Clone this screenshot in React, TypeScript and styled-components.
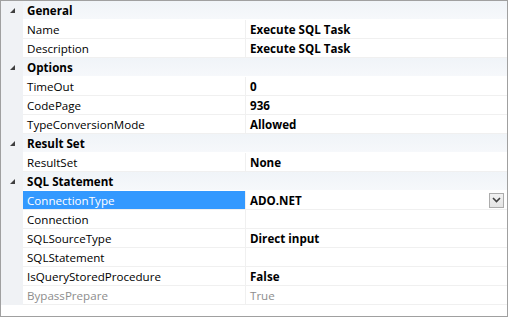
import styled, { createGlobalStyle } from 'styled-components';

const GlobalStyle = createGlobalStyle`
  html, body {
    margin: 0;
    padding: 0;
    background: #ffffff;
  }
  body {
    font-family: 'Open Sans', 'Noto Sans', sans-serif;
    font-size: 11.6px;
    color: #000000;
  }
`;

const Grid = styled.div`
  width: 506px;
  height: 315px;
  border: 1px solid #a0a0a0;
  background: #ffffff;
  box-sizing: content-box;
  overflow: hidden;
`;

const Row = styled.div`
  display: flex;
  height: 19px;
  align-items: stretch;
`;

const Margin = styled.div`
  width: 22px;
  flex-shrink: 0;
  background: #f0f2f5;
  display: flex;
  align-items: center;
  justify-content: center;
`;

const CategoryCell = styled.div`
  flex: 1;
  display: flex;
  align-items: center;
  padding-left: 4px;
  font-weight: 700;
  background: linear-gradient(#f0f4f8, #f6f8fb);
  border-bottom: 1px solid #ffffff;
`;

const NameCell = styled.div<{ $selected?: boolean; $disabled?: boolean }>`
  width: 218px;
  flex-shrink: 0;
  display: flex;
  align-items: center;
  padding-left: 4px;
  white-space: nowrap;
  border-right: 1px solid #f0f0f0;
  border-bottom: 1px solid #f0f0f0;
  background: ${(p) => (p.$selected ? '#3399ff' : '#ffffff')};
  color: ${(p) => (p.$selected ? '#ffffff' : p.$disabled ? '#8d8d8d' : '#000000')};
`;

const ValueCell = styled.div<{ $disabled?: boolean }>`
  flex: 1;
  display: flex;
  align-items: center;
  padding-left: 4px;
  padding-right: 2px;
  font-weight: ${(p) => (p.$disabled ? 400 : 700)};
  color: ${(p) => (p.$disabled ? '#8d8d8d' : '#000000')};
  border-bottom: 1px solid #f0f0f0;
  white-space: nowrap;
`;

const ValueText = styled.span`
  flex: 1;
`;

const DropButton = styled.div`
  width: 15px;
  height: 15px;
  border: 1px solid #acacac;
  background: linear-gradient(#f2f2f2, #e4e4e4);
  display: flex;
  align-items: center;
  justify-content: center;
  box-sizing: border-box;
  margin-right: 1px;
`;

const Expander = () => (
  <svg width="7" height="7" viewBox="0 0 7 7">
    <path d="M6 1 L6 6 L1 6 Z" fill="#404040" />
  </svg>
);

const Chevron = () => (
  <svg width="9" height="6" viewBox="0 0 9 6">
    <path d="M1 1 L4.5 4.5 L8 1" fill="none" stroke="#404040" strokeWidth="1.6" />
  </svg>
);

type Prop = { name: string; value: string; selected?: boolean; disabled?: boolean; dropdown?: boolean };
type Category = { title: string; props: Prop[] };

const categories: Category[] = [
  {
    title: 'General',
    props: [
      { name: 'Name', value: 'Execute SQL Task' },
      { name: 'Description', value: 'Execute SQL Task' },
    ],
  },
  {
    title: 'Options',
    props: [
      { name: 'TimeOut', value: '0' },
      { name: 'CodePage', value: '936' },
      { name: 'TypeConversionMode', value: 'Allowed' },
    ],
  },
  {
    title: 'Result Set',
    props: [{ name: 'ResultSet', value: 'None' }],
  },
  {
    title: 'SQL Statement',
    props: [
      { name: 'ConnectionType', value: 'ADO.NET', selected: true, dropdown: true },
      { name: 'Connection', value: '' },
      { name: 'SQLSourceType', value: 'Direct input' },
      { name: 'SQLStatement', value: '' },
      { name: 'IsQueryStoredProcedure', value: 'False' },
      { name: 'BypassPrepare', value: 'True', disabled: true },
    ],
  },
];

export default function App() {
  return (
    <>
      <GlobalStyle />
      <Grid>
        {categories.map((cat) => (
          <div key={cat.title}>
            <Row>
              <Margin>
                <Expander />
              </Margin>
              <CategoryCell>{cat.title}</CategoryCell>
            </Row>
            {cat.props.map((p) => (
              <Row key={p.name}>
                <Margin />
                <NameCell $selected={p.selected} $disabled={p.disabled}>
                  {p.name}
                </NameCell>
                <ValueCell $disabled={p.disabled}>
                  <ValueText>{p.value}</ValueText>
                  {p.dropdown && (
                    <DropButton>
                      <Chevron />
                    </DropButton>
                  )}
                </ValueCell>
              </Row>
            ))}
          </div>
        ))}
      </Grid>
    </>
  );
}
